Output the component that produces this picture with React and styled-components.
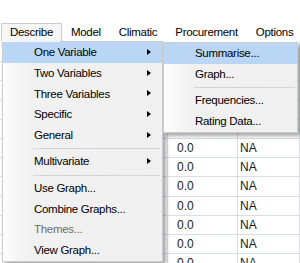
import React from 'react'
import styled, { createGlobalStyle, css } from 'styled-components'

const GlobalStyle = createGlobalStyle`
  html, body {
    margin: 0;
    padding: 0;
    background: #fff;
  }
  body {
    overflow: hidden;
  }
`

const menuFont = css`
  font-family: "Liberation Sans", Arial, sans-serif;
  font-size: 11.5px;
  letter-spacing: -0.3px;
  color: #000;
`

const Page = styled.div`
  position: relative;
  width: 300px;
  height: 263px;
  overflow: hidden;
  padding-top: 23px;
  box-sizing: border-box;
`

const MenuBar = styled.div`
  ${menuFont};
  display: flex;
  height: 18px;
  padding-left: 1px;
  background: #fff;
`

const BarItem = styled.div`
  box-sizing: border-box;
  height: 18px;
  line-height: 17px;
  padding: 0 8px;
  border: 1px solid transparent;
  border-bottom: none;
  white-space: nowrap;
  position: relative;
  z-index: 3;

  ${({ $open }) => $open && css`
    border-color: #cccccc;
    background: #f7f7f7;
  `}
`

const Sheet = styled.div`
  display: grid;
  grid-template-columns: 168px 70px 1fr;
  padding-top: 2px;
  font-family: "Liberation Sans", Arial, sans-serif;
  font-size: 12px;
  color: #1a1a1a;
`

const Cell = styled.div`
  box-sizing: border-box;
  height: 19.2px;
  line-height: 18px;
  border-bottom: 1px solid #d9dee6;
  border-right: 1px solid #d9dee6;
  padding-left: ${({ $pad }) => $pad}px;
  white-space: nowrap;
`

const Dropdown = styled.div`
  ${menuFont};
  position: absolute;
  box-sizing: border-box;
  border: 1px solid #cccccc;
  background: linear-gradient(to right, #fdfdfd 0, #f1f1f1 26px, #f0f0f0 100%);
  box-shadow: 3px 3px 4px rgba(0, 0, 0, 0.35);
  left: ${({ $x }) => $x}px;
  top: ${({ $y }) => $y}px;
  width: ${({ $w }) => $w}px;
  z-index: ${({ $z }) => $z};

  ${({ $openTop }) => $openTop && css`
    border-top-color: transparent;
    &::before {
      content: "";
      position: absolute;
      top: -1px;
      left: ${$openTop}px;
      right: -1px;
      height: 1px;
      background: #cccccc;
    }
  `}
`

const Item = styled.div`
  position: relative;
  height: 20.8px;
  line-height: 20.8px;
  padding-left: 31px;
  white-space: nowrap;
  background: ${({ $hot }) => ($hot ? '#b9d7f4' : 'transparent')};
  color: ${({ $disabled }) => ($disabled ? '#6d6d6d' : '#000')};
`

const Arrow = styled.span`
  position: absolute;
  right: 11px;
  top: 50%;
  margin-top: -3.5px;
  width: 0;
  height: 0;
  border-left: 4px solid #000;
  border-top: 3.5px solid transparent;
  border-bottom: 3.5px solid transparent;
`

const Separator = styled.div`
  height: 5.5px;
  display: flex;
  align-items: center;
  padding: 0 2px 0 30px;

  &::after {
    content: "";
    flex: 1;
    height: 1px;
    background: #d5d5d5;
  }
`

const barItems = ['Describe', 'Model', 'Climatic', 'Procurement', 'Options']

const mainItems = [
  { label: 'One Variable', sub: true, hot: true },
  { label: 'Two Variables', sub: true },
  { label: 'Three Variables', sub: true },
  { label: 'Specific', sub: true },
  { label: 'General', sub: true },
  'sep',
  { label: 'Multivariate', sub: true },
  'sep',
  { label: 'Use Graph...' },
  { label: 'Combine Graphs...' },
  { label: 'Themes...', disabled: true },
  { label: 'View Graph...' },
]

const subItems = [
  { label: 'Summarise...', hot: true },
  { label: 'Graph...' },
  'sep',
  { label: 'Frequencies...' },
  { label: 'Rating Data...' },
]

const renderItems = (items) =>
  items.map((it, i) =>
    it === 'sep' ? (
      <Separator key={i} />
    ) : (
      <Item key={i} $hot={it.hot} $disabled={it.disabled}>
        {it.label}
        {it.sub && <Arrow />}
      </Item>
    )
  )

const App = () => {
  // rows under the open menus are left empty, only the lower ones show
  const rows = Array.from({ length: 12 }, (_, r) => r >= 5)

  return (
    <Page>
      <GlobalStyle />
      <MenuBar>
        {barItems.map((name) => (
          <BarItem key={name} $open={name === 'Describe'}>{name}</BarItem>
        ))}
      </MenuBar>

      <Sheet>
        {rows.map((filled, r) => (
          <React.Fragment key={r}>
            <Cell $pad={4} />
            <Cell $pad={9}>{filled && '0.0'}</Cell>
            <Cell $pad={2}>{filled && 'NA'}</Cell>
          </React.Fragment>
        ))}
      </Sheet>

      <Dropdown $x={2} $y={41} $w={161} $z={4} $openTop={57}>
        {renderItems(mainItems)}
      </Dropdown>

      <Dropdown $x={163} $y={42} $w={135} $z={5}>
        {renderItems(subItems)}
      </Dropdown>
    </Page>
  )
}

export default App
